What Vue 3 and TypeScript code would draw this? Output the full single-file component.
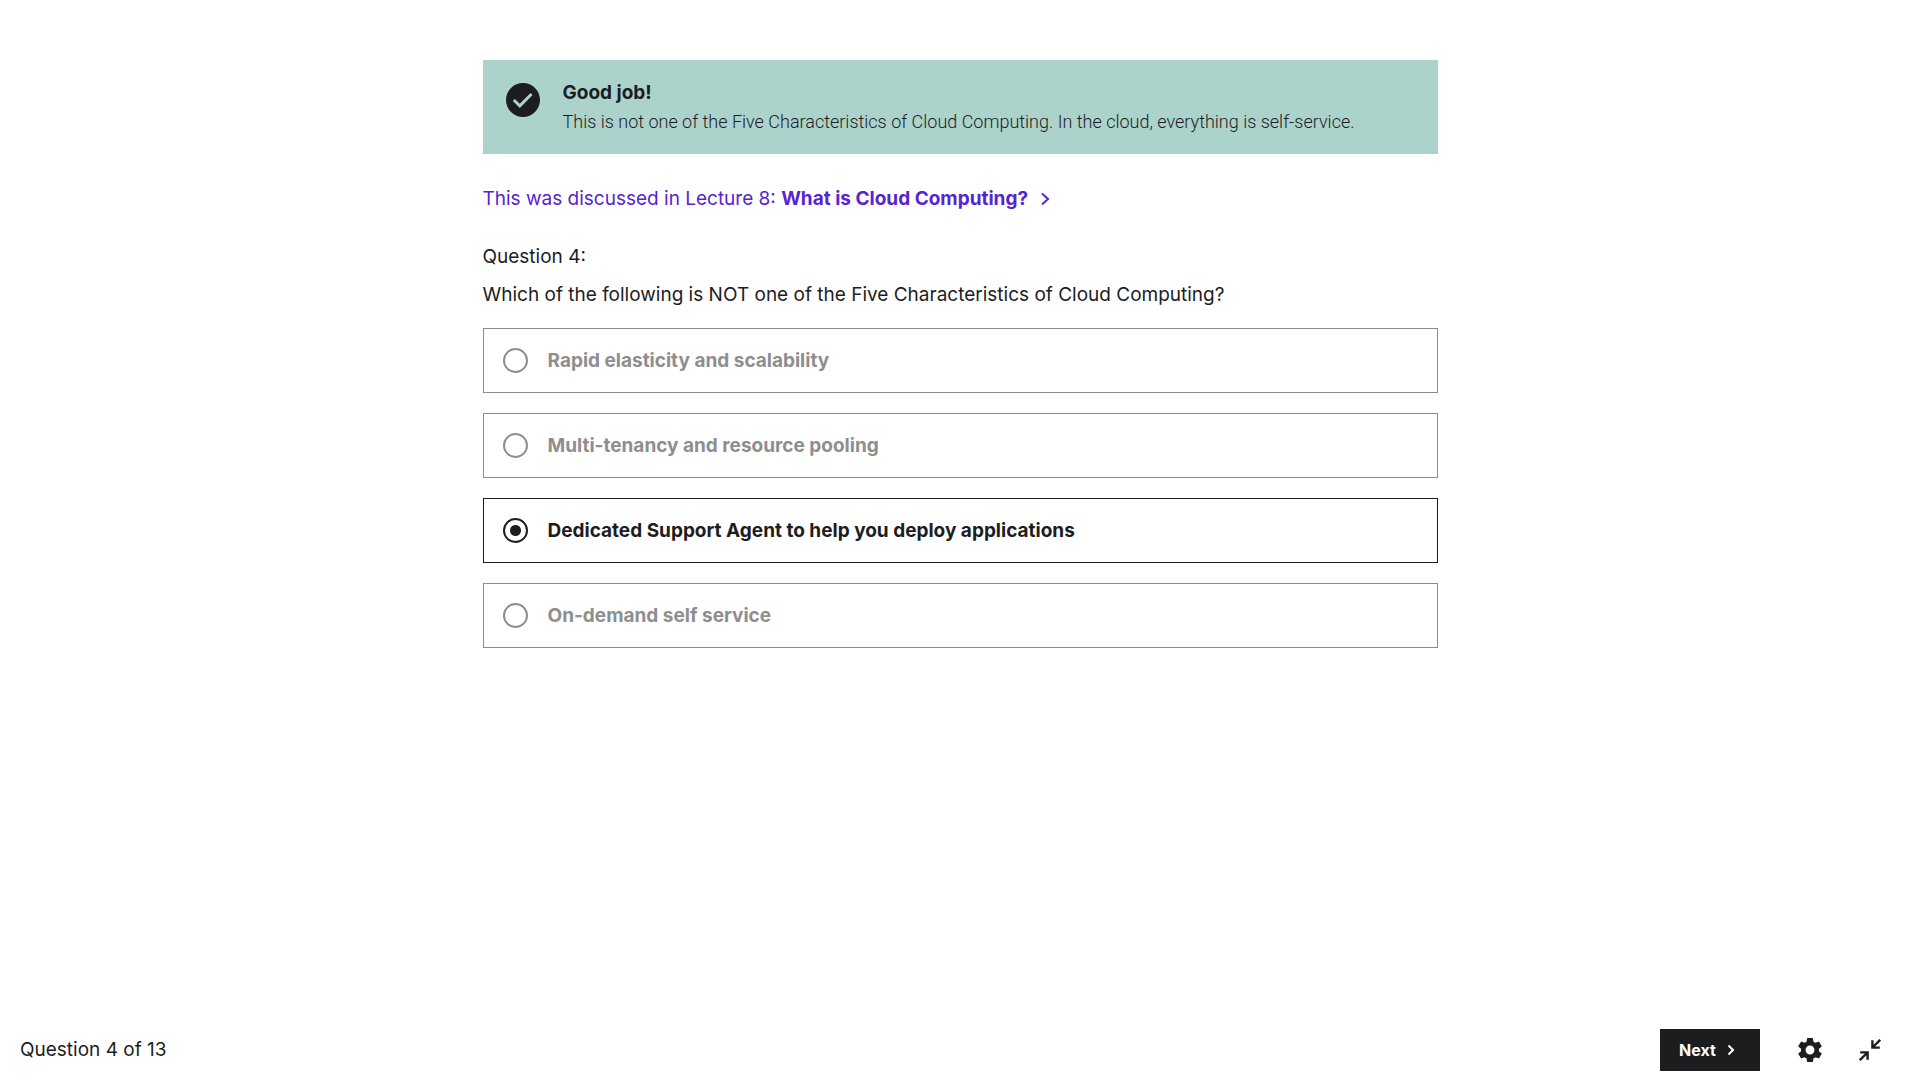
<script setup lang="ts">
import { ref } from 'vue'

interface Answer {
  id: string
  text: string
}

const answers: Answer[] = [
  { id: 'elasticity', text: 'Rapid elasticity and scalability' },
  { id: 'tenancy', text: 'Multi-tenancy and resource pooling' },
  { id: 'support', text: 'Dedicated Support Agent to help you deploy applications' },
  { id: 'self-service', text: 'On-demand self service' },
]

const selected = ref('support')
</script>

<template>
  <div class="quiz">
    <main class="content">
      <section class="alert" role="status">
        <svg class="alert-icon" viewBox="0 0 34 34" aria-hidden="true">
          <circle cx="17" cy="17" r="17" />
          <path d="M7.8 17 L13.8 22.8 L25.6 11" />
        </svg>
        <div class="alert-body">
          <h2 class="alert-title">Good job!</h2>
          <p class="alert-text">
            This is not one of the Five Characteristics of Cloud Computing. In the cloud, everything is self-service.
          </p>
        </div>
      </section>

      <a class="lecture-link" href="#lecture-8">
        <span>This was discussed in Lecture 8: <strong>What is Cloud Computing?</strong></span>
        <svg class="chevron" viewBox="0 0 12 16" aria-hidden="true"><path d="M2 2.5 L8 8 L2 13.5" /></svg>
      </a>

      <p class="question-label">Question 4:</p>
      <p id="prompt" class="question-text">Which of the following is NOT one of the Five Characteristics of Cloud Computing?</p>

      <div class="answers" role="radiogroup" aria-labelledby="prompt">
        <label
          v-for="answer in answers"
          :key="answer.id"
          class="answer"
          :class="{ chosen: answer.id === selected }"
        >
          <input v-model="selected" class="radio" type="radio" name="answer" :value="answer.id" />
          <span>{{ answer.text }}</span>
        </label>
      </div>
    </main>

    <footer class="footer">
      <span class="progress">Question 4 of 13</span>
      <div class="actions">
        <button class="next" type="button">
          <span>Next</span>
          <svg class="next-chevron" viewBox="0 0 8 12" aria-hidden="true"><path d="M1.5 1.5 L6 6 L1.5 10.5" /></svg>
        </button>
        <button class="icon-button" type="button" aria-label="Settings">
          <svg class="gear" viewBox="2 2 20 20" aria-hidden="true">
            <path
              fill-rule="evenodd"
              d="M19.43 12.98c.04-.32.07-.64.07-.98s-.03-.66-.07-.98l2.11-1.65c.19-.15.24-.42.12-.64l-2-3.46c-.12-.22-.39-.3-.61-.22l-2.49 1c-.52-.4-1.08-.73-1.69-.98l-.38-2.65C14.46 2.18 14.25 2 14 2h-4c-.25 0-.46.18-.49.42l-.38 2.65c-.61.25-1.17.59-1.69.98l-2.49-1c-.23-.09-.49 0-.61.22l-2 3.46c-.13.22-.07.49.12.64l2.11 1.65c-.04.32-.07.65-.07.98s.03.66.07.98l-2.11 1.65c-.19.15-.24.42-.12.64l2 3.46c.12.22.39.3.61.22l2.49-1c.52.4 1.08.73 1.69.98l.38 2.65c.03.24.24.42.49.42h4c.25 0 .46-.18.49-.42l.38-2.65c.61-.25 1.17-.59 1.69-.98l2.49 1c.23.09.49 0 .61-.22l2-3.46c.12-.22.07-.49-.12-.64l-2.11-1.65zM12 15.7a3.7 3.7 0 1 1 0-7.4 3.7 3.7 0 0 1 0 7.4z"
            />
          </svg>
        </button>
        <button class="icon-button" type="button" aria-label="Exit fullscreen">
          <svg class="collapse" viewBox="0 0 22 22" aria-hidden="true">
            <path d="M21.2 .8 L14 8 M13.4 1.2 V8.6 H20.8 M.8 21.2 L8 14 M1.2 13.4 H8.6 V20.8" />
          </svg>
        </button>
      </div>
    </footer>
  </div>
</template>

<style>
body {
  margin: 0;
  background: #fff;
}
</style>

<style scoped>
.quiz {
  display: flex;
  flex-direction: column;
  min-height: 100vh;
  color: #1c1d1f;
  font-family: Inter, "Liberation Sans", sans-serif;
  font-size: 19px;
  line-height: 28px;
}

.content {
  flex: 1;
  box-sizing: border-box;
  width: 100%;
  max-width: 955px;
  margin: 0 auto;
  padding: 60px 0 20px;
}

.alert {
  display: flex;
  gap: 23px;
  padding: 18px 23px;
  background: #acd2cc;
}

.alert-icon {
  flex: none;
  width: 34px;
  height: 34px;
  margin-top: 5px;
  fill: #1c1d1f;
}

.alert-icon path {
  fill: none;
  stroke: #acd2cc;
  stroke-width: 3;
}

.alert-title {
  margin: 0;
  font-size: 19px;
  font-weight: 700;
  line-height: 29px;
}

.alert-text {
  margin: 0;
  font-family: Roboto, Inter, sans-serif;
  font-size: 18px;
  font-weight: 300;
  line-height: 29px;
}

.lecture-link {
  display: flex;
  align-items: center;
  gap: 12px;
  width: fit-content;
  margin-top: 31px;
  color: #5624d0;
  text-decoration: none;
}

.lecture-link strong {
  font-weight: 700;
}

.chevron {
  width: 12px;
  height: 16px;
}

.chevron path,
.next-chevron path {
  fill: none;
  stroke: currentColor;
  stroke-width: 2;
}

.question-label {
  margin: 30px 0 0;
}

.question-text {
  margin: 10px 0 19px;
}

.answers {
  display: flex;
  flex-direction: column;
  gap: 20px;
}

.answer {
  display: flex;
  align-items: center;
  gap: 20px;
  box-sizing: border-box;
  min-height: 65px;
  padding: 0 19px;
  border: 1px solid #8c8c8d;
  color: #8e8e8f;
  font-weight: 700;
}

.answer.chosen {
  border-color: #1c1d1f;
  color: #1c1d1f;
}

.radio {
  appearance: none;
  flex: none;
  box-sizing: border-box;
  width: 25px;
  height: 25px;
  margin: 0;
  border: 2px solid currentColor;
  border-radius: 50%;
  color: inherit;
}

.radio:checked {
  background: radial-gradient(circle, currentColor 5px, transparent 6px);
}

.footer {
  display: flex;
  align-items: center;
  justify-content: space-between;
  height: 60px;
  padding: 0 30px 0 20px;
}

.actions {
  display: flex;
  align-items: center;
  gap: 20px;
}

.next {
  display: flex;
  align-items: center;
  gap: 11px;
  box-sizing: border-box;
  width: 100px;
  height: 42px;
  margin-right: 10px;
  padding: 0 19px;
  border: 0;
  background: #1c1d1f;
  color: #fff;
  font-family: inherit;
  font-size: 16px;
  font-weight: 700;
}

.next-chevron {
  width: 8px;
  height: 12px;
}

.icon-button {
  display: flex;
  align-items: center;
  justify-content: center;
  width: 40px;
  height: 40px;
  padding: 0;
  border: 0;
  background: none;
  color: #1c1d1f;
}

.gear {
  width: 24px;
  height: 24px;
  fill: currentColor;
}

.collapse {
  width: 22px;
  height: 22px;
  fill: none;
  stroke: currentColor;
  stroke-width: 2.4;
}
</style>
